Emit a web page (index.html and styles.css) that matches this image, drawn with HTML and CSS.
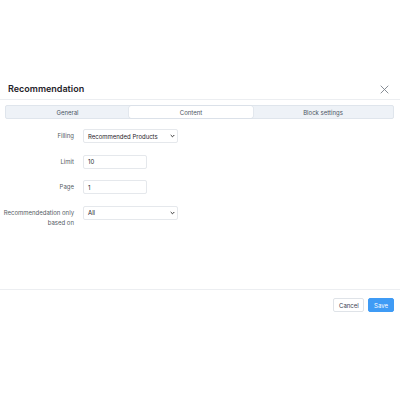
FILE: index.html
```html
<!DOCTYPE html>
<html>
<head>
<meta charset="utf-8">
<link rel="stylesheet" href="styles.css">
</head>
<body>
<div class="modal">
  <div class="header">
    <div class="title">Recommendation</div>
    <button class="close" aria-label="Close">
      <svg width="9" height="9" viewBox="0 0 9 9"><path d="M0.7 0.7L8.3 8.3M8.3 0.7L0.7 8.3" stroke="#7b818a" stroke-width="0.9" fill="none"/></svg>
    </button>
  </div>
  <div class="tabs">
    <div class="tab">General</div>
    <div class="tab active">Content</div>
    <div class="tab">Block settings</div>
  </div>
  <div class="form">
    <div class="row">
      <label class="label">Filling</label>
      <div class="select wide"><span>Recommended Products</span><svg class="chev" width="5" height="4" viewBox="0 0 5 4"><path d="M0.7 1L2.5 2.8L4.3 1" stroke="#333" stroke-width="1" fill="none"/></svg></div>
    </div>
    <div class="row">
      <label class="label">Limit</label>
      <div class="input">10</div>
    </div>
    <div class="row">
      <label class="label">Page</label>
      <div class="input">1</div>
    </div>
    <div class="row">
      <label class="label">Recommendedation only based on</label>
      <div class="select wide"><span>All</span><svg class="chev" width="5" height="4" viewBox="0 0 5 4"><path d="M0.7 1L2.5 2.8L4.3 1" stroke="#333" stroke-width="1" fill="none"/></svg></div>
    </div>
  </div>
  <div class="footer">
    <button class="btn cancel">Cancel</button>
    <button class="btn save">Save</button>
  </div>
</div>
</body>
</html>
```
FILE: styles.css
```css
html, body {
  margin: 0;
  padding: 0;
  background: #fff;
  font-family: Inter, "Noto Sans", sans-serif;
  color: #4b5563;
}
.modal {
  margin-top: 78px;
}
.header {
  height: 21px;
  display: flex;
  align-items: center;
  justify-content: space-between;
  padding: 0 8px 0 8px;
  border-bottom: 1px solid #eceef1;
}
.title {
  font-size: 9px;
  font-weight: 600;
  color: #1f2329;
  margin-top: 0;
}
.close {
  border: 0;
  background: none;
  padding: 0;
  width: 9px;
  height: 9px;
  display: flex;
  margin-right: 3px;
  margin-top: 1px;
}
.tabs {
  margin: 5px 6px 0 5px;
  height: 12px;
  display: grid;
  grid-template-columns: 123px 124px 1fr;
  background: #eef2f7;
  border: 1px solid #dfe5ec;
  border-radius: 2px;
}
.tab {
  font-size: 6px;
  color: #4b5563;
  display: flex;
  align-items: center;
  justify-content: center;
}
.tab.active {
  background: #fff;
  border-radius: 2px;
  box-shadow: 0 0 0 0.5px #d8dee6;
}
.form {
  padding: 10px 0 0 0;
  height: 160px;
  border-bottom: 1px solid #eceef1;
  display: flex;
  flex-direction: column;
  gap: 11.5px;
}
.row {
  display: grid;
  grid-template-columns: 74px auto;
  column-gap: 9px;
  align-items: start;
}
.label {
  font-size: 6px;
  color: #555b63;
  text-align: right;
  line-height: 10.5px;
  padding-top: 2px;
}
.select, .input {
  box-sizing: border-box;
  height: 14px;
  border: 1px solid #e5e8ec;
  border-radius: 2px;
  font-size: 6px;
  color: #1f2329;
  display: flex;
  align-items: center;
  padding: 0 4px;
  background: #fff;
}
.select.wide {
  width: 95px;
  justify-content: space-between;
  padding-right: 2px;
}
.input {
  width: 64px;
}
.footer {
  display: flex;
  justify-content: flex-end;
  gap: 4px;
  padding: 8px 6px 0 0;
}
.btn {
  height: 14px;
  box-sizing: border-box;
  font-family: Inter, "Noto Sans", sans-serif;
  font-size: 6px;
  border-radius: 2px;
  padding: 0 5px;
  cursor: pointer;
}
.cancel {
  background: #fff;
  border: 1px solid #dfe3e8;
  color: #374151;
  width: 31px;
}
.save {
  background: #3f9bf5;
  border: 1px solid #3f9bf5;
  color: #fff;
  width: 26px;
}
```
